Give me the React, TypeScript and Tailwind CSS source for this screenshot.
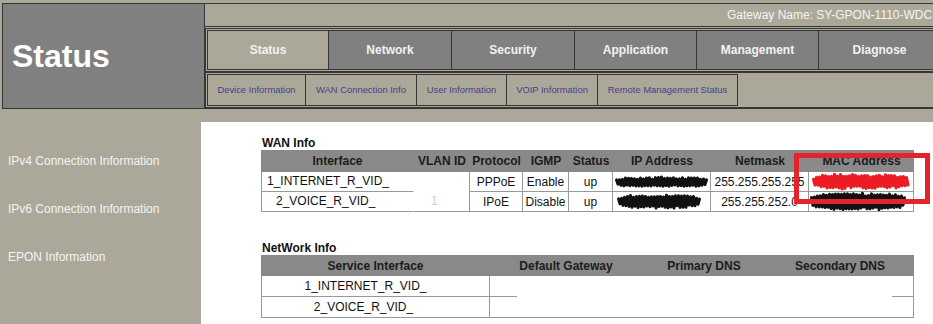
import React from "react";

const rnd = (i: number, s: number) => {
  const v = Math.sin(i * 12.9898 + s * 78.233) * 43758.5453;
  return v - Math.floor(v);
};

// hand-drawn marker blob used to hide addresses
function Scribble({ w, h, color, seed }: { w: number; h: number; color: string; seed: number }) {
  const pts: string[] = [];
  let i = 0;
  for (let x = 1.5; x < w - 1; x += 1.5) {
    const t = Math.abs((2 * x) / w - 1);
    const env = Math.sqrt(Math.max(0, 1 - Math.pow(t, 4)));
    const a = (h / 2 - 1.5) * (0.25 + 0.75 * env) * (0.72 + 0.28 * rnd(i, seed));
    const off = (rnd(i + 50, seed) - 0.5) * 1.5;
    const y = i % 2 === 0 ? h / 2 - a + off : h / 2 + a + off;
    pts.push(`${x.toFixed(1)},${y.toFixed(1)}`);
    i++;
  }
  return (
    <svg width={w} height={h} viewBox={`0 0 ${w} ${h}`} className="block shrink-0 overflow-visible">
      <polyline points={pts.join(" ")} fill="none" stroke={color} strokeWidth={3} strokeLinejoin="round" strokeLinecap="round" />
    </svg>
  );
}

const tabs: [string, number][] = [
  ["Status", 122],
  ["Network", 123],
  ["Security", 123],
  ["Application", 122],
  ["Management", 122],
  ["Diagnose", 122],
];

const subTabs: [string, number][] = [
  ["Device Information", 99],
  ["WAN Connection Info", 111],
  ["User Information", 90],
  ["VOIP Information", 91],
  ["Remote Management Status", 140],
];

const wanCols = [153, 56, 53, 46, 44, 98, 98, 105];
const wanHead = ["Interface", "VLAN ID", "Protocol", "IGMP", "Status", "IP Address", "Netmask", "MAC Address"];

export default function App() {
  return (
    <div className="w-[933px] h-[324px] overflow-hidden bg-[#aca899] font-['Liberation_Sans',Arial,sans-serif]">
      <div className="pt-[3px] pl-[2px]">
        <div className="flex w-[1000px] h-[106px] border-t border-l border-b border-[#363636]">
          <div className="w-[202px] shrink-0 bg-[#808080] border-r border-[#363636] flex items-center pl-[9px]">
            <span className="text-[32px] font-bold text-white">Status</span>
          </div>
          <div className="flex-1 flex flex-col">
            <div className="h-[23px] border-b border-[#363636] pl-[522px] text-[12px] leading-[22px] text-[#f4f4f4] whitespace-nowrap">
              Gateway Name: SY-GPON-1110-WDC
            </div>
            <div className="mt-px h-[44px] border border-[#363636] p-px flex">
              {tabs.map(([t, w], i) => (
                <div
                  key={t}
                  style={{ width: w }}
                  className={`shrink-0 h-full flex items-center justify-center border-y border-r border-[#363636] text-[12px] font-bold text-[#f2f2f2] ${
                    i === 0 ? "border-l bg-[#aca899]" : "bg-[#808080]"
                  }`}
                >
                  {t}
                </div>
              ))}
            </div>
            <div className="h-[36px] border border-[#363636] p-px flex">
              {subTabs.map(([t, w], i) => (
                <div
                  key={t}
                  style={{ width: w }}
                  className={`shrink-0 h-full flex items-center justify-center border-y border-r border-[#363636] text-[9.4px] text-[#463f8e] whitespace-nowrap ${
                    i === 0 ? "border-l" : ""
                  }`}
                >
                  {t}
                </div>
              ))}
            </div>
          </div>
        </div>
      </div>

      <div className="flex mt-[13px]">
        <div className="w-[201px] shrink-0 pt-[32px] pl-[8px] text-[12px] leading-[14px] text-[#f3f3f3]">
          <div className="h-[48px]">IPv4 Connection Information</div>
          <div className="h-[48px]">IPv6 Connection Information</div>
          <div className="h-[48px]">EPON Information</div>
        </div>

        <div className="flex-1 h-[202px] bg-white pl-[60px] pt-[14px] text-[12px] text-[#111]">
          <div className="h-[14px] leading-[14px] pl-px font-bold">WAN Info</div>
          <div className="relative w-[653px]">
            <div className="flex h-[22px] bg-[#898989] font-bold text-[#1c1c1c]">
              {wanHead.map((h, i) => (
                <div key={h} style={{ width: wanCols[i] }} className="shrink-0 flex items-center justify-center">
                  {h}
                </div>
              ))}
            </div>
            <div className="flex h-[20px]">
              <div className="w-[153px] shrink-0 border-l border-b border-r border-[#999] border-r-white pl-[5px] leading-[19px]">1_INTERNET_R_VID_</div>
              <div className="w-[56px] shrink-0 border-r border-[#999]" />
              <div className="w-[53px] shrink-0 border-r border-b border-[#999] flex items-center justify-center">PPPoE</div>
              <div className="w-[46px] shrink-0 border-r border-b border-[#999] flex items-center justify-center">Enable</div>
              <div className="w-[44px] shrink-0 border-r border-b border-[#999] flex items-center justify-center">up</div>
              <div className="w-[98px] shrink-0 border-r border-b border-[#999] flex items-center justify-center">
                <Scribble w={94} h={12} color="#111" seed={3} />
              </div>
              <div className="w-[98px] shrink-0 border-r border-b border-[#999] flex items-center justify-center whitespace-nowrap">255.255.255.255</div>
              <div className="w-[105px] shrink-0 border-r border-b border-[#999] flex items-center pl-[3px]">
                <Scribble w={98} h={17} color="#ec1c24" seed={7} />
              </div>
            </div>
            <div className="flex h-[20px]">
              <div className="w-[153px] shrink-0 border-l border-b border-r border-[#999] border-r-white pl-[14px] leading-[19px]">2_VOICE_R_VID_</div>
              <div className="w-[56px] shrink-0 border-r border-b border-[#999] pl-[17px] leading-[19px] text-[#d0d0d0]">1</div>
              <div className="w-[53px] shrink-0 border-r border-b border-[#999] flex items-center justify-center">IPoE</div>
              <div className="w-[46px] shrink-0 border-r border-b border-[#999] flex items-center justify-center">Disable</div>
              <div className="w-[44px] shrink-0 border-r border-b border-[#999] flex items-center justify-center">up</div>
              <div className="w-[98px] shrink-0 border-r border-b border-[#999] flex items-center pl-[4px]">
                <Scribble w={84} h={15} color="#111" seed={11} />
              </div>
              <div className="w-[98px] shrink-0 border-r border-b border-[#999] flex items-center justify-center">255.255.252.0</div>
              <div className="w-[105px] shrink-0 border-r border-b border-[#999] flex items-center pl-[1px]">
                <Scribble w={96} h={19} color="#111" seed={19} />
              </div>
            </div>
            <div className="absolute left-[533px] top-[3px] w-[136px] h-[51px] border-[5px] border-[#e2252b]" />
          </div>

          <div className="mt-[29px] h-[14px] leading-[14px] pl-px font-bold">NetWork Info</div>
          <div className="w-[653px]">
            <div className="flex h-[21px] bg-[#898989] font-bold text-[#1c1c1c]">
              <div className="w-[229px] shrink-0 flex items-center justify-center">Service Interface</div>
              <div className="w-[152px] shrink-0 flex items-center justify-center">Default Gateway</div>
              <div className="w-[124px] shrink-0 flex items-center justify-center">Primary DNS</div>
              <div className="w-[148px] shrink-0 flex items-center justify-center">Secondary DNS</div>
            </div>
            <div className="flex h-[42px]">
              <div className="w-[229px] shrink-0 flex flex-col">
                <div className="h-[21px] border-l border-r border-b border-[#999] pr-[20px] text-center leading-[20px]">1_INTERNET_R_VID_</div>
                <div className="h-[21px] border-l border-r border-b border-[#999] pr-[24px] text-center leading-[20px]">2_VOICE_R_VID_</div>
              </div>
              <div className="w-[152px] shrink-0 flex flex-col border-b border-[#999]">
                <div className="h-[20px]" />
                <div className="h-px w-[27px] bg-[#999]" />
              </div>
              <div className="w-[124px] shrink-0 border-b border-[#999]" />
              <div className="w-[148px] shrink-0 flex flex-col items-end border-r border-b border-[#999]">
                <div className="h-[20px]" />
                <div className="h-px w-[21px] bg-[#999]" />
              </div>
            </div>
          </div>
        </div>
      </div>
    </div>
  );
}
